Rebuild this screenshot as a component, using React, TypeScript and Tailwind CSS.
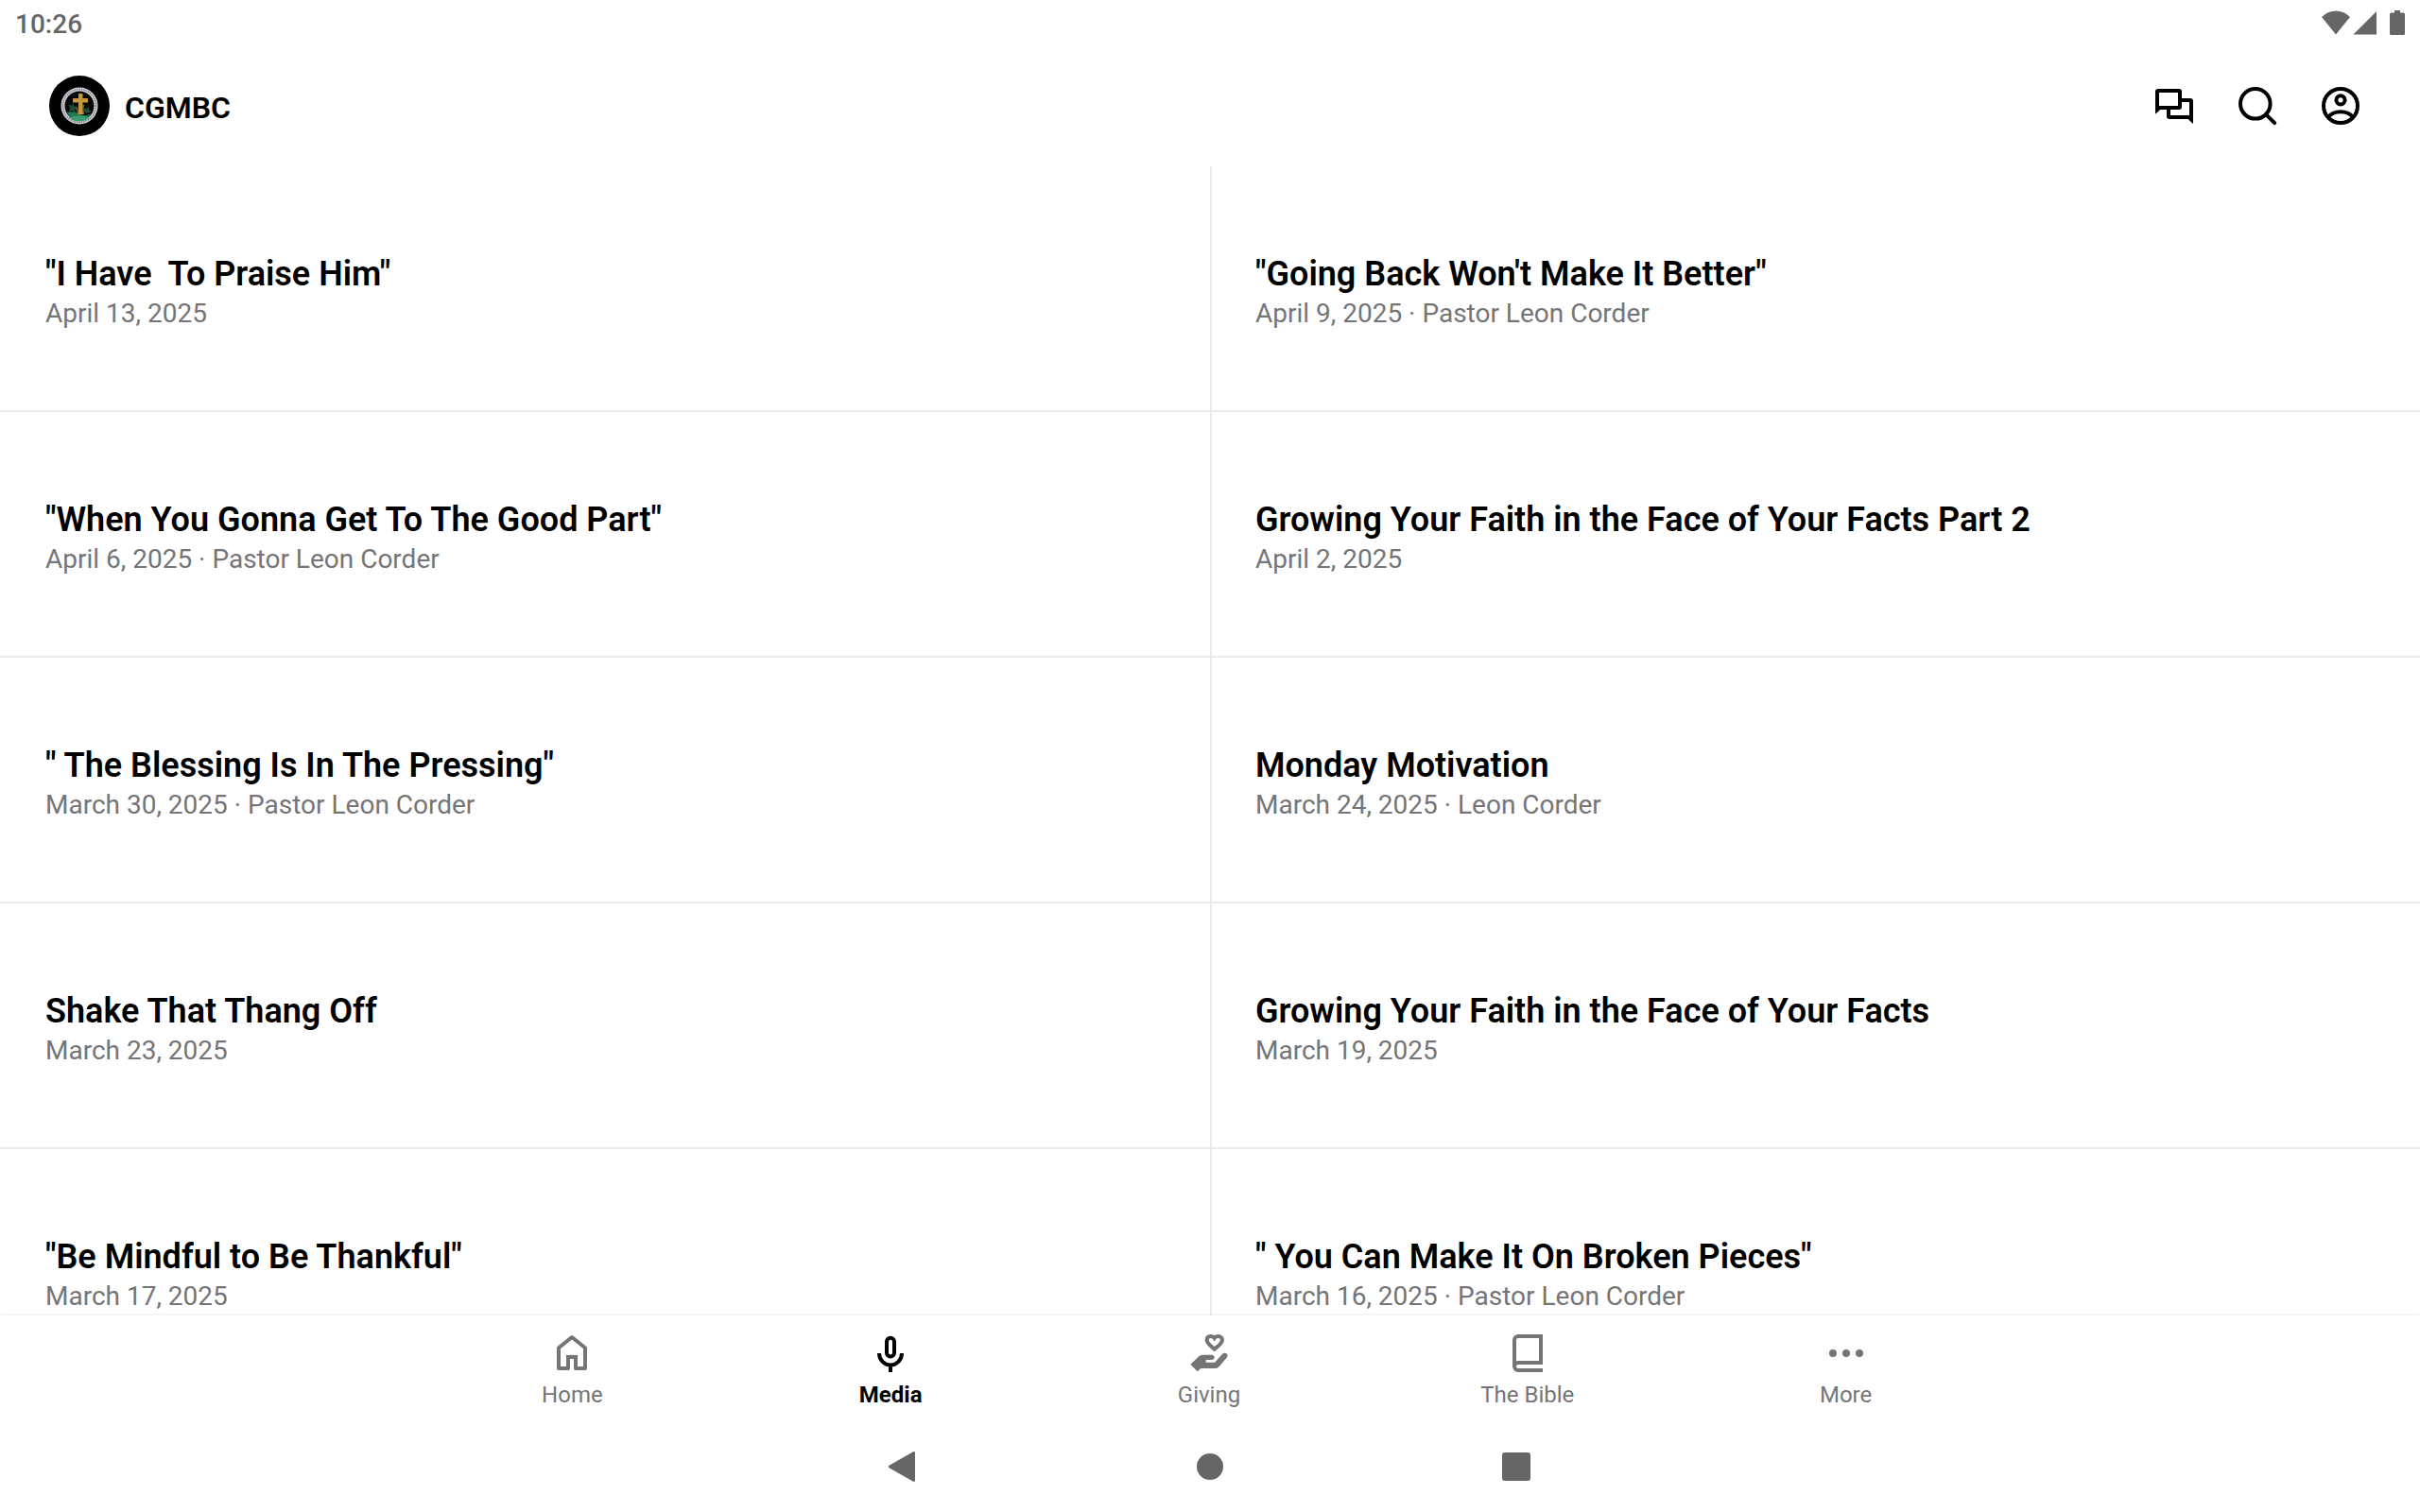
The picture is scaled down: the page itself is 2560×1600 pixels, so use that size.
import React, { useState } from "react";

interface Sermon {
  id: number;
  title: string;
  meta: string;
}

interface Tab {
  label: string;
  icon: React.ReactNode;
}

const sermons: Sermon[] = [
  { id: 1, title: '"I Have  To Praise Him"', meta: "April 13, 2025" },
  { id: 2, title: '"Going Back Won\'t Make It Better"', meta: "April 9, 2025 · Pastor Leon Corder" },
  { id: 3, title: '"When You Gonna Get To The Good Part"', meta: "April 6, 2025 · Pastor Leon Corder" },
  { id: 4, title: "Growing Your Faith in the Face of Your Facts Part 2", meta: "April 2, 2025" },
  { id: 5, title: '" The Blessing Is In The Pressing"', meta: "March 30, 2025 · Pastor Leon Corder" },
  { id: 6, title: "Monday Motivation", meta: "March 24, 2025 · Leon Corder" },
  { id: 7, title: "Shake That Thang Off", meta: "March 23, 2025" },
  { id: 8, title: "Growing Your Faith in the Face of Your Facts", meta: "March 19, 2025" },
  { id: 9, title: '"Be Mindful to Be Thankful"', meta: "March 17, 2025" },
  { id: 10, title: '" You Can Make It On Broken Pieces"', meta: "March 16, 2025 · Pastor Leon Corder" },
];

const tabs: Tab[] = [
  {
    label: "Home",
    icon: (
      <svg viewBox="0 0 24 24" className="size-12" fill="none" stroke="currentColor" strokeWidth="2">
        <path d="M5 20V9.1L12 3.5l7 5.6V20h-5v-6h-4v6z" strokeLinejoin="round" />
        <path d="M9 14v-1h6v1" strokeWidth="0.1" fill="currentColor" />
      </svg>
    ),
  },
  {
    label: "Media",
    icon: (
      <svg viewBox="0 0 24 24" className="size-12" fill="none" stroke="currentColor" strokeWidth="2">
        <rect x="10" y="3.9" width="4" height="9.9" rx="2" />
        <path d="M6 12c0 3.5 2.7 6.2 6 6.2s6-2.7 6-6.2M12 18v4" />
      </svg>
    ),
  },
  {
    label: "Giving",
    icon: (
      <svg viewBox="106 84 144 144" className="size-12" fill="currentColor">
        <path
          d="M195 143C185 134 171 125 171 114C171 106 176 102 183 102C189 102 193 105 195 108C197 105 201 102 207 102C215 102 220 107 220 114C220 125 205 134 195 143Z"
          fill="none"
          stroke="currentColor"
          strokeWidth="12"
        />
        <path d="M119 191L146 166Q151 161 160 161H187A8 8 0 0 1 187 177H168V185H196L219 160Q226 153 233 157Q240 163 234 170L208 200Q204 204 198 204H152L141 214Z" />
      </svg>
    ),
  },
  {
    label: "The Bible",
    icon: (
      <svg viewBox="0 0 24 24" className="size-12" fill="none" stroke="currentColor" strokeWidth="2">
        <path d="M20 21H7a2 2 0 0 1-2-2V5a2 2 0 0 1 2-2h12v14H7a2 2 0 0 0-2 2" />
      </svg>
    ),
  },
  {
    label: "More",
    icon: (
      <svg viewBox="0 0 24 24" className="size-12" fill="currentColor">
        <circle cx="5" cy="12" r="2" />
        <circle cx="12" cy="12" r="2" />
        <circle cx="19" cy="12" r="2" />
      </svg>
    ),
  },
];

const StatusBar = () => (
  <div className="flex h-12 shrink-0 items-center justify-between px-4 text-[#666666]">
    <span className="pt-1 text-[28px] leading-8 font-medium">10:26</span>
    <div className="flex items-center">
      <svg viewBox="0 0 30 26" className="h-[26px] w-[30px]" fill="currentColor">
        <path d="M0 7Q6.500 .5 15 .5T30 7L15 25.500z" />
      </svg>
      <svg viewBox="0 0 26 26" className="ml-[3px] h-[26px] w-[26px]" fill="currentColor">
        <path d="M25 1v24.500H.5z" />
      </svg>
      <svg viewBox="0 0 16 26" className="ml-[13px] h-[26px] w-4" fill="currentColor">
        <path d="M5 0h6v2.500h3.500A1.500 1.500 0 0 1 16 4v20.500a1.500 1.500 0 0 1-1.500 1.500h-13A1.500 1.500 0 0 1 0 24.500V4a1.500 1.500 0 0 1 1.500-1.500H5z" />
      </svg>
    </div>
  </div>
);

const Logo = () => (
  <svg viewBox="0 0 64 64" className="size-16" aria-hidden="true">
    <circle cx="32" cy="32" r="32" fill="#000" />
    <circle cx="32" cy="32" r="17.500" fill="#050807" stroke="#d3cdd5" strokeWidth="4" />
    <circle cx="32" cy="32" r="17.500" fill="none" stroke="#77717b" strokeWidth="1.400" strokeDasharray="1.300 1.100" />
    <path d="M18.500 39Q25 37 32 40.500T45 40A15.500 15.500 0 0 1 18.500 39z" fill="#1f7a50" />
    <path d="M21 44Q32 41 43 44A15.500 15.500 0 0 1 21 44z" fill="#3a9b70" />
    <path d="M31 19h4.500v5H41v4.500h-5.500L36 41h-5.500l.5-12.500h-6V24h6z" fill="#c8963a" />
    <path
      d="M20 30l4 2 1-3 2 4 3 1-3 2 2 4-5-3-3 1 1-4zM36 34l3 1 3-2v3l3 2-5 2-4-2z"
      fill="#1c4a35"
    />
    <path d="M28 33q3 4 2 9M37 31q-3 5 0 10" fill="none" stroke="#8c6a2c" strokeWidth="1.200" />
  </svg>
);

const Header = () => (
  <header className="flex h-32 shrink-0 items-center justify-between pr-[60px] pl-[52px]">
    <div className="flex items-center gap-4">
      <Logo />
      <h1 className="pt-1 text-[32px] leading-10 font-semibold text-black">CGMBC</h1>
    </div>
    <div className="flex items-center gap-10">
      <button type="button" aria-label="Messages">
        <svg viewBox="0 0 24 24" className="size-12" fill="currentColor" fillRule="evenodd">
          <path d="M3.500 3h11A1.500 1.500 0 0 1 16 4.500v8a1.500 1.500 0 0 1-1.500 1.500H4.600L2 16.400V4.500A1.500 1.500 0 0 1 3.500 3zM4 5v7h10V5z" />
          <path d="M16 8h4.500A1.500 1.500 0 0 1 22 9.500v12L19.300 19H9.500A1.500 1.500 0 0 1 8 17.500V13h2v4h10v-7h-4z" />
        </svg>
      </button>
      <button type="button" aria-label="Search">
        <svg viewBox="0 0 24 24" className="size-12" fill="none" stroke="currentColor" strokeWidth="2" strokeLinecap="round">
          <circle cx="10.900" cy="10.900" r="7.900" />
          <path d="M16.700 16.700l4.400 4.400" />
        </svg>
      </button>
      <button type="button" aria-label="Account">
        <svg viewBox="0 0 24 24" className="size-12" fill="none" stroke="currentColor" strokeWidth="2">
          <circle cx="12" cy="12" r="9" />
          <circle cx="12" cy="8.900" r="2.300" />
          <path d="M5.200 18.200C6.800 16.200 9.300 15.100 12 15.100s5.200 1.100 6.800 3.100" />
        </svg>
      </button>
    </div>
  </header>
);

const SystemNav = () => (
  <div className="flex h-24 shrink-0 items-center justify-center gap-[276px] text-[#666666]">
    <button type="button" aria-label="Back">
      <svg viewBox="0 0 48 48" className="size-12" fill="currentColor">
        <path d="M9 22.500L34 8.300Q36 7.500 36 9.500v29q0 2-2 1.200L9 25.500Q7 24 9 22.500z" />
      </svg>
    </button>
    <button type="button" aria-label="Home screen">
      <svg viewBox="0 0 48 48" className="size-12" fill="currentColor">
        <circle cx="24" cy="24" r="14" />
      </svg>
    </button>
    <button type="button" aria-label="Recent apps">
      <svg viewBox="0 0 48 48" className="size-12" fill="currentColor">
        <rect x="9" y="9" width="30" height="30" rx="3" />
      </svg>
    </button>
  </div>
);

const App: React.FC = () => {
  const [activeTab, setActiveTab] = useState("Media");

  return (
    <div className="flex h-screen flex-col bg-white font-['Roboto',sans-serif] text-black">
      <StatusBar />
      <Header />

      {/* Sermon list */}
      <main className="min-h-0 flex-1 overflow-hidden">
        <div className="grid grid-cols-2">
          {sermons.map((sermon) => (
            <a
              key={sermon.id}
              href={`#sermon-${sermon.id}`}
              className="flex h-[260px] flex-col justify-center border-b-2 border-[#ebebeb] px-12 pt-2.5 even:border-l-2 even:pl-[46px]"
            >
              <h2 className="text-[36px] leading-[44px] font-semibold whitespace-pre">{sermon.title}</h2>
              <p className="text-[28px] leading-10 text-[#757577]">{sermon.meta}</p>
            </a>
          ))}
        </div>
      </main>

      {/* Bottom tabs */}
      <nav className="flex h-28 shrink-0 justify-center bg-white pr-0.5 shadow-[0_-1px_3px_rgba(0,0,0,0.07)]">
        <div className="grid w-full max-w-[1684px] grid-cols-5">
          {tabs.map((tab) => (
            <button
              key={tab.label}
              type="button"
              onClick={() => setActiveTab(tab.label)}
              className={
                activeTab === tab.label
                  ? "flex flex-col items-center gap-1 pt-4 font-bold text-black"
                  : "flex flex-col items-center gap-1 pt-4 text-[#757577]"
              }
            >
              {tab.icon}
              <span className="text-2xl leading-8">{tab.label}</span>
            </button>
          ))}
        </div>
      </nav>

      <div className="bg-white">
        <SystemNav />
      </div>
    </div>
  );
};

export default App;
